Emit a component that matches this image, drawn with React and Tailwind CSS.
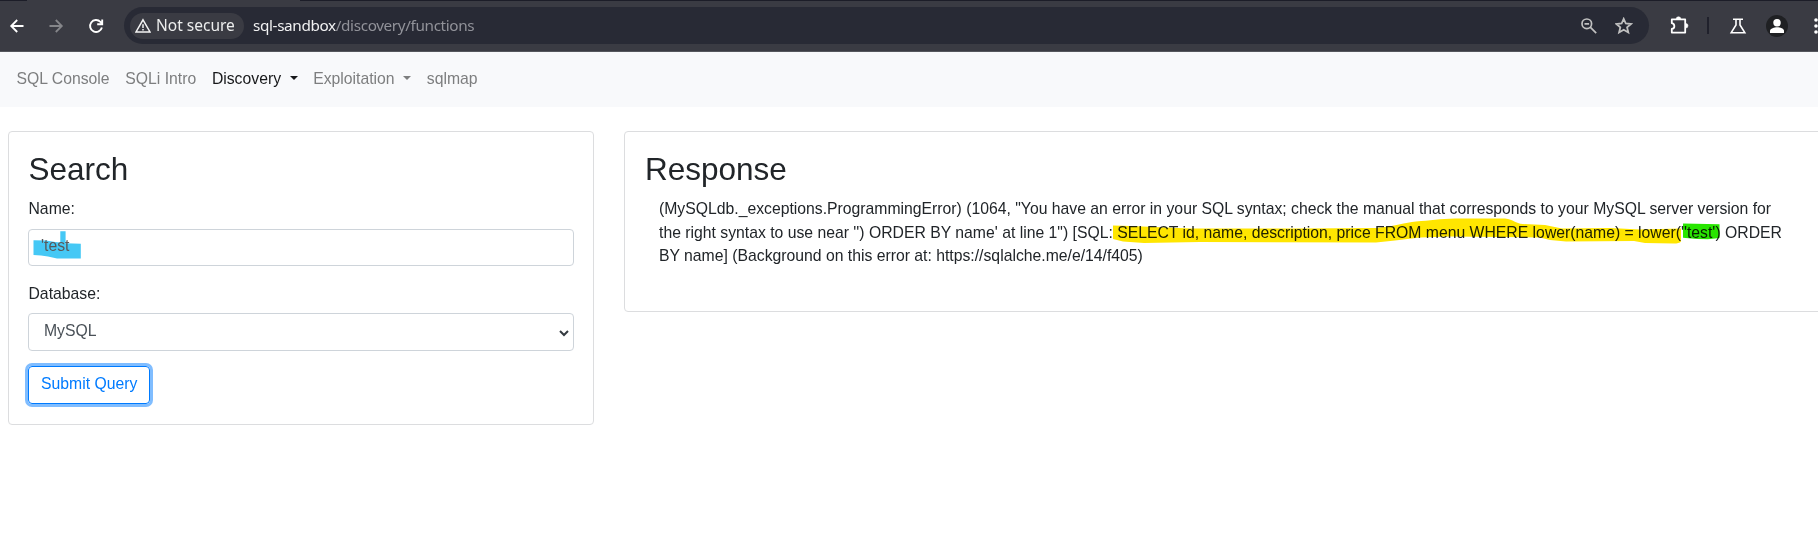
import React from "react";

function Caret() {
  return <span className="ml-[8.5px] mt-[-2px] h-0 w-0 border-x-[4.5px] border-t-[4.5px] border-x-transparent border-t-current" />;
}

function BrowserBar() {
  return (
    <div className="relative flex h-[52px] w-full shrink-0 items-center border-b border-[#55575d] bg-[#3a3b43] font-['Noto_Sans',sans-serif] text-[15px]">
      <div className="absolute left-0 top-0 h-px w-[27px] bg-[#1c1d28]" />
      <div className="absolute left-[300px] right-0 top-0 h-px bg-[#1c1d28]" />
      <svg className="ml-2 h-[18px] w-[18px] shrink-0" viewBox="0 0 18 18" fill="none" stroke="#fff" strokeWidth="1.8"><path d="M15.5 9H3.5M9.2 3L3.2 9l6 6" /></svg>
      <svg className="ml-[21px] h-[18px] w-[18px] shrink-0" viewBox="0 0 18 18" fill="none" stroke="#85868a" strokeWidth="1.8"><path d="M2.5 9h12M8.8 3l6 6l-6 6" /></svg>
      <svg className="ml-[22px] h-[18px] w-[18px] shrink-0" viewBox="0 0 18 18" fill="none" stroke="#fff" strokeWidth="1.9"><path d="M14.9 10.5A6 6 0 1 1 13.4 4.8L15 6.4M15.2 2.4V7.2H10.2" /></svg>
      <div className="ml-[19px] flex h-[37px] w-[1525px] shrink-0 items-center rounded-full bg-[#282a35]">
        <div className="ml-[6px] flex h-[26px] w-[114px] items-center rounded-full bg-[#3a3b43] pl-[5px] text-[15.5px] text-[#eceded]">
          <svg className="mr-[5px] h-4 w-4 shrink-0" viewBox="0 0 16 16" fill="none" stroke="#f4f4f4" strokeWidth="1.5"><path d="M8 1.8L15 14H1Z" /><path d="M8 6.2v3.8M8 11v1.5" /></svg>
          <span className="whitespace-nowrap">Not secure</span>
        </div>
        <span className="ml-[9px] whitespace-nowrap text-[15.3px] tracking-[-0.37px] text-[#f1f1f2]">sql-sandbox<span className="text-[#919299]">/discovery/functions</span></span>
        <svg className="ml-auto h-[18px] w-[18px]" viewBox="0 0 18 18" fill="none" stroke="#c0c0c0" strokeWidth="1.7"><circle cx="6.8" cy="6.8" r="4.8" /><path d="M10.2 10.2L16.2 16.2M4.5 6.8h4.6" /></svg>
        <svg className="ml-[17px] mr-[16px] h-[18px] w-[18px]" viewBox="0 0 18 18" fill="none" stroke="#c0c0c0" strokeWidth="1.8"><path d="M8.7 1.8L10.8 6.5L16 7L12.1 10.4L13.3 15.5L8.7 12.8L4.1 15.5L5.3 10.4L1.4 7L6.6 6.5Z" /></svg>
      </div>
      <svg className="ml-[20px] h-5 w-5 shrink-0" viewBox="0 0 20 20" fill="none" stroke="#fff" strokeWidth="1.8" strokeLinejoin="round"><path d="M2.8 3.4H16.2V16.6H2.8V13C6.2 12.3 6.2 8 2.8 7.2Z" /><path d="M7.2 3a2.2 2.2 0 0 1 4.6 0zM16.7 7.4a2.3 2.3 0 0 1 0 4.6z" fill="#fff" strokeWidth=".5" /></svg>
      <div className="ml-[18px] h-[17px] w-[2px] shrink-0 bg-[#20212c]" />
      <svg className="ml-[20px] h-[18px] w-[18px] shrink-0" viewBox="0 0 18 18" fill="none" stroke="#fff" strokeWidth="1.6"><path d="M4 2.2h10M7 2.2V8L2.2 15.7H15.8L11 8V2.2" /></svg>
      <svg className="ml-[19px] h-[22px] w-[22px] shrink-0" viewBox="0 0 22 22"><circle cx="11" cy="11" r="11" fill="#1f2023" /><circle cx="11" cy="7.7" r="3.7" fill="#fff" /><path d="M4 18v-2c0-2.6 4.5-3.7 7-3.7s7 1.1 7 3.7v2z" fill="#fff" /></svg>
      <svg className="ml-[26px] h-[18px] w-[4px] shrink-0" viewBox="0 0 4 18" fill="#fff"><circle cx="2" cy="3" r="1.8" /><circle cx="2" cy="9" r="1.8" /><circle cx="2" cy="15" r="1.8" /></svg>
    </div>
  );
}

export default function App() {
  return (
    <div className="flex h-[548px] w-[1818px] flex-col overflow-hidden bg-white font-['Liberation_Sans',Arial,sans-serif] text-[15.76px] leading-[23.6px] text-[#212529]">
      <BrowserBar />
      <nav className="flex h-[55px] shrink-0 items-center gap-[15.7px] bg-[#f8f9fb] pb-px pl-[16.5px] text-[#7d7e7f]">
        <span>SQL Console</span>
        <span>SQLi Intro</span>
        <span className="flex items-center text-[#17181a]">Discovery<Caret /></span>
        <span className="flex items-center">Exploitation<Caret /></span>
        <span>sqlmap</span>
      </nav>
      <main className="flex items-start gap-[30px] pl-2 pt-6">
        <section className="flex h-[294px] w-[586px] shrink-0 flex-col items-start rounded-[4px] border border-[#dcdddf] pl-[19px] pt-[19px]">
          <h2 className="pl-[0.5px] text-[31.5px] leading-[37.5px]">Search</h2>
          <label className="mt-[8px] pl-[0.5px]">Name:</label>
          <div className="relative mt-[9px] flex h-[37px] w-[546px] items-center rounded-[4px] border border-[#ced4da] pl-[12px] text-[#495057]">
            <svg className="absolute left-0 top-0 h-[35px] w-[70px]" viewBox="29 230 70 35" fill="#45c8f5"><path d="M33.5 240.3L46 240.4L55 242L60.3 242.5V231.3H65.6V243.3L80.8 243.7V258.6H57L48 256.5L41 255.5L33.5 255Z" /></svg>
            <span className="relative mt-[-3px] text-[#59595b]">'test</span>
          </div>
          <label className="mt-[15.5px] pl-[0.5px]">Database:</label>
          <div className="mt-[8px] flex h-[38px] w-[546px] items-center justify-between rounded-[4px] border border-[#ced4da] pl-[15px] pr-[4px] text-[#495057]">
            <span className="mt-[-2px]">MySQL</span>
            <svg className="mt-px h-[10px] w-[10px]" viewBox="0 0 10 10" fill="none" stroke="#343a40" strokeWidth="2"><path d="M1 3L5 7L9 3" /></svg>
          </div>
          <button className="mt-[15px] flex h-[38px] w-[122px] items-center justify-center rounded-[4px] border border-[#007bff] pb-[2px] pl-[0.5px] text-[#007bff] shadow-[0_0_0_3px_#80bdff]">Submit Query</button>
        </section>
        <section className="h-[181px] w-[1210px] shrink-0 rounded-[4px] border border-[#dcdddf] pl-[20px] pt-[19px]">
          <h2 className="text-[31.5px] leading-[37.5px]">Response</h2>
          <div className="relative ml-[14px] mt-[8px] whitespace-nowrap">
            <p className="leading-[24px]">(MySQLdb._exceptions.ProgrammingError) (1064, "You have an error in your SQL syntax; check the manual that corresponds to your MySQL server version for</p>
            <p className="leading-[24px]">the right syntax to use near '') ORDER BY name' at line 1") [SQL: SELECT id, name, description, price FROM menu WHERE lower(name) = lower(''test') ORDER</p>
            <p className="leading-[22px]">BY name] (Background on this error at: https://sqlalche.me/e/14/f405)</p>
            <svg className="absolute left-0 top-0 h-[70px] w-[1150px] mix-blend-multiply" viewBox="659 196.5 1150 70">
              <path fill="#ffe600" d="M1113 225L1130 225.5L1190 228L1300 228L1376 227.5C1395 226 1405 222 1416 221C1430 220 1440 218.2 1455 218H1505C1514 219 1515 223 1523 223.5L1545 224.5L1562 228L1610 227.5L1640 229L1681 228V241Q1679 243 1674 243L1645 242.5L1634 240.5L1566 241L1550 239.5L1540 237L1450 236L1420 237L1395 240L1376 242L1200 241.5L1144 242.5L1123 241L1113 238.5Z" />
              <path fill="#28e600" d="M1683 223L1719.5 223.7V237.5L1708 238.7L1697 238.5L1683 237.3Z" />
            </svg>
          </div>
        </section>
      </main>
    </div>
  );
}
